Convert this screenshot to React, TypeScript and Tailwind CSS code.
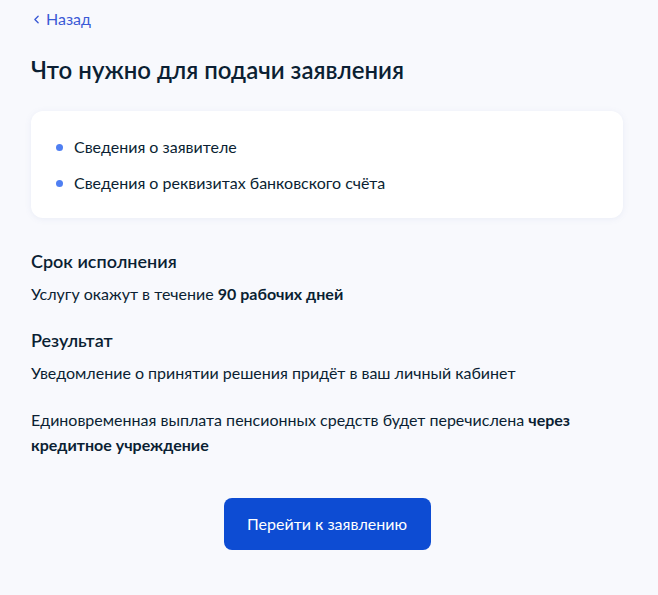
import { ChevronLeft } from 'lucide-react';

const requirements = [
  'Сведения о заявителе',
  'Сведения о реквизитах банковского счёта',
];

export default function App() {
  return (
    <main
      className="min-h-[595px] w-[658px] bg-[#f8f9fd] pl-[31px] pr-[35px] pt-[9px] pb-10 text-[#0b1f33]"
      style={{ fontFamily: 'Lato, "Noto Sans", sans-serif' }}
    >
      <a href="#" className="flex h-5 items-center gap-[3px] text-[16px] leading-5 text-[#3b5ad6]">
        <ChevronLeft className="h-[13px] w-[13px] -ml-[1px]" strokeWidth={2.5} />
        <span>Назад</span>
      </a>

      <h1 className="mt-[25px] text-[24px] font-semibold leading-[32px]">
        Что нужно для подачи заявления
      </h1>

      <section className="mt-[25px] rounded-xl bg-white px-6 pt-6 pb-[23px] shadow-[0_1px_6px_rgba(106,128,190,0.10)]">
        <ul className="flex flex-col gap-3">
          {requirements.map((item) => (
            <li key={item} className="flex h-6 items-center text-[16px] leading-6">
              <span className="ml-[1px] mr-[11px] h-[7px] w-[7px] rounded-full bg-[#4f7ff2]" />
              {item}
            </li>
          ))}
        </ul>
      </section>

      <h2 className="mt-[31px] text-[18px] font-semibold leading-6">Срок исполнения</h2>
      <p className="mt-[9px] text-[16px] leading-6">
        Услугу окажут в течение <b className="font-bold">90 рабочих дней</b>
      </p>

      <h2 className="mt-[22px] text-[18px] font-semibold leading-6">Результат</h2>
      <p className="mt-[9px] text-[16px] leading-6">
        Уведомление о принятии решения придёт в ваш личный кабинет
      </p>

      <p className="mt-[22px] text-[16px] leading-[25px]">
        Единовременная выплата пенсионных средств будет перечислена{' '}
        <b className="font-bold">через кредитное учреждение</b>
      </p>

      <div className="mt-[41px] flex justify-center">
        <button className="h-[52px] w-[207px] rounded-lg bg-[#0d4cd3] text-[16px] text-white">
          Перейти к заявлению
        </button>
      </div>
    </main>
  );
}
